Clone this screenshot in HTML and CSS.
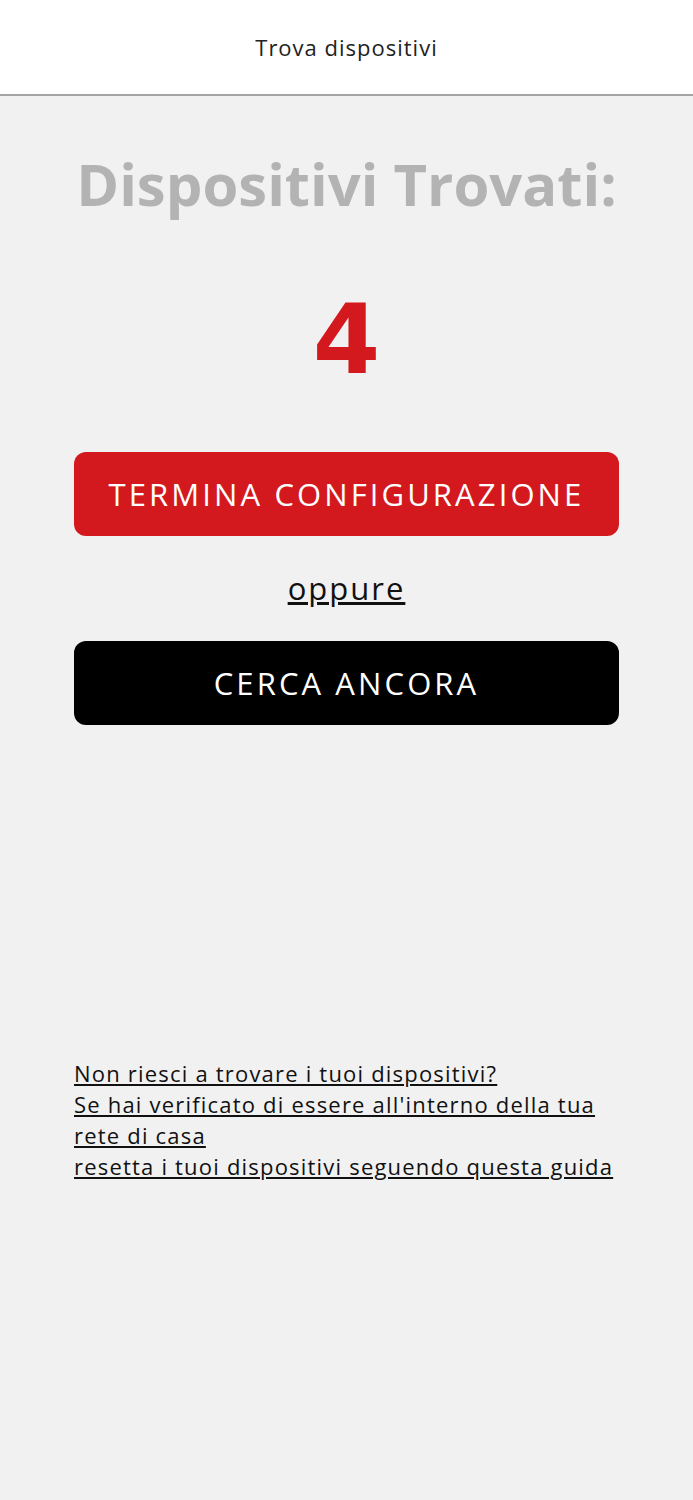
FILE: index.html
```html
<!DOCTYPE html>
<html lang="it">
<head>
  <meta charset="UTF-8">
  <title>Trova dispositivi</title>
  <link rel="stylesheet" href="styles.css">
</head>
<body>
  <header class="topbar">
    <span class="topbar-title">Trova dispositivi</span>
  </header>

  <main class="content">
    <h1 class="found-title">Dispositivi Trovati:</h1>
    <div class="found-count">4</div>

    <button class="btn btn-red">TERMINA CONFIGURAZIONE</button>
    <a class="or-link" href="#">oppure</a>
    <button class="btn btn-black">CERCA ANCORA</button>

    <p class="help">
      <a href="#">Non riesci a trovare i tuoi dispositivi?</a><br>
      <a href="#">Se hai verificato di essere all'interno della tua rete di casa</a><br>
      <a href="#">resetta i tuoi dispositivi seguendo questa guida</a>
    </p>
  </main>
</body>
</html>
```

FILE: styles.css
```css
html, body { margin: 0; padding: 0; }
body { font-family: "Open Sans", "DejaVu Sans", sans-serif; background: #f1f1f1; color: #111; min-height: 1500px; }

.topbar { height: 94px; background: #fff; border-bottom: 2px solid #a3a3a3; display: flex; align-items: center; justify-content: center; }
.topbar-title { font-size: 22px; letter-spacing: 1px; color: #222; }

.content { width: 545px; margin: 0 auto; display: flex; flex-direction: column; align-items: center; }

.found-title { margin: 48px 0 0; font-size: 58px; font-weight: 700; color: #b3b3b3; line-height: 80px; white-space: nowrap; }
.found-count { margin-top: 61px; font-family: "DejaVu Sans", sans-serif; font-size: 97px; font-weight: 700; color: #d4191e; line-height: 110px; }

.btn { width: 100%; height: 84px; border: none; border-radius: 12px; color: #fff; font-family: inherit; font-size: 31px; letter-spacing: 3.1px; cursor: pointer; }
.btn-red { margin-top: 57px; background: #d4191e; }
.btn-black { background: #000; }

.or-link { margin: 31px 0 32px; font-size: 31px; letter-spacing: 2px; color: #111; text-decoration: underline; line-height: 42px; }

.help { align-self: stretch; margin: 333px 0 0; font-size: 22px; letter-spacing: 1.2px; line-height: 31px; }
.help a { color: #111; text-decoration: underline; }
```
